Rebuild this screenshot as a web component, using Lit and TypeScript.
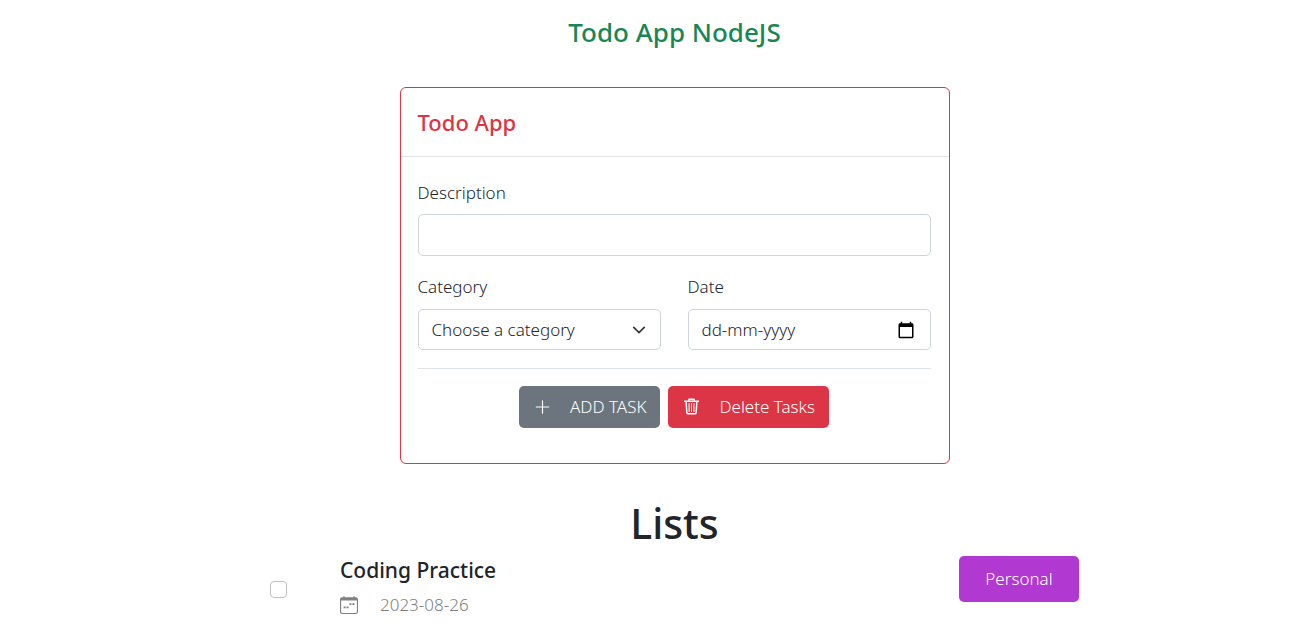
import { LitElement, html, css } from "lit";
import { customElement, property, state } from "lit/decorators.js";

interface Task {
  id: number;
  title: string;
  date: string;
  category: string;
}

@customElement("todo-form")
class TodoForm extends LitElement {
  static styles = css`
    :host {
      display: block;
    }
    * {
      box-sizing: border-box;
    }
    .card {
      border: 1px solid #dc3545;
      border-radius: 6px;
      background: #fff;
    }
    .card-header {
      padding: 18px 17px;
      border-bottom: 1px solid #dee2e6;
    }
    .card-title {
      margin: 0;
      font-size: 22px;
      line-height: 32px;
      font-weight: 500;
      color: #dc3545;
    }
    .card-body {
      padding: 22px 18px 35px 17px;
    }
    .field {
      display: flex;
      flex-direction: column;
      gap: 8px;
      min-width: 0;
    }
    .pair {
      display: grid;
      grid-template-columns: repeat(2, minmax(0, 1fr));
      gap: 27px;
      margin-top: 17px;
    }
    .pair .field {
      gap: 9px;
    }
    .label {
      line-height: 27px;
    }
    .control {
      width: 100%;
      height: 42px;
      padding: 0 14px;
      border: 1px solid #ced4da;
      border-radius: 5px;
      background: #fff;
      color: #212529;
      font: inherit;
      outline: none;
    }
    .control:focus,
    .date:focus-within {
      border-color: #86b7fe;
    }
    .select-wrap {
      display: grid;
      align-items: center;
    }
    .select-wrap > * {
      grid-area: 1 / 1;
    }
    .select {
      appearance: none;
      padding: 0 40px 0 13px;
    }
    .pair .control {
      height: 41px;
    }
    .chevron {
      justify-self: end;
      width: 14px;
      height: 14px;
      margin-right: 15px;
      pointer-events: none;
    }
    .date {
      display: flex;
      align-items: center;
      padding: 0 13px;
    }
    .date-input {
      flex: 1;
      min-width: 0;
      padding: 0;
      border: 0;
      background: none;
      color: inherit;
      font: inherit;
      outline: none;
    }
    .date-input::placeholder {
      color: #212529;
      opacity: 1;
    }
    .picker {
      display: flex;
      padding: 0 2px;
      border: 0;
      background: none;
      color: #000;
    }
    .picker svg {
      width: 18px;
      height: 18px;
    }
    .rule {
      height: 1px;
      margin: 18px 0 17px;
      border: 0;
      background: #dee2e6;
    }
    .actions {
      display: flex;
      justify-content: center;
      gap: 8px;
    }
    .btn {
      display: flex;
      align-items: center;
      gap: 18px;
      height: 42px;
      padding: 0 14px;
      border: 0;
      border-radius: 5px;
      color: #fff;
      font: inherit;
      cursor: pointer;
    }
    .btn svg {
      width: 19px;
      height: 18px;
    }
    .add {
      background: #6c757d;
    }
    .delete {
      background: #dc3545;
    }
  `;

  render() {
    return html`
      <form class="card" @submit=${(e: Event) => e.preventDefault()}>
        <div class="card-header"><h2 class="card-title">Todo App</h2></div>
        <div class="card-body">
          <div class="field">
            <label class="label" for="description">Description</label>
            <input class="control" id="description" type="text" autocomplete="off" />
          </div>
          <div class="pair">
            <div class="field">
              <label class="label" for="category">Category</label>
              <div class="select-wrap">
                <select class="control select" id="category">
                  <option>Choose a category</option>
                  <option>Personal</option>
                </select>
                <svg class="chevron" viewBox="0 0 16 16" fill="none" stroke="#343a40" stroke-width="2" stroke-linecap="round" stroke-linejoin="round" aria-hidden="true">
                  <path d="m2 5 6 6 6-6" />
                </svg>
              </div>
            </div>
            <div class="field">
              <label class="label" for="date">Date</label>
              <div class="control date">
                <input class="date-input" id="date" type="text" placeholder="dd-mm-yyyy" />
                <button class="picker" type="button" aria-label="Open calendar">
                  <svg viewBox="0 0 24 24" fill="currentColor" aria-hidden="true">
                    <path d="M20 3h-1V1h-2v2H7V1H5v2H4c-1.1 0-2 .9-2 2v16c0 1.1.9 2 2 2h16c1.1 0 2-.9 2-2V5c0-1.1-.9-2-2-2zm0 18H4V8h16v13z" />
                  </svg>
                </button>
              </div>
            </div>
          </div>
          <hr class="rule" />
          <div class="actions">
            <button class="btn add" type="submit">
              <svg viewBox="0 0 16 16" fill="currentColor" aria-hidden="true">
                <path d="M8 2a.5.5 0 0 1 .5.5v5h5a.5.5 0 0 1 0 1h-5v5a.5.5 0 0 1-1 0v-5h-5a.5.5 0 0 1 0-1h5v-5A.5.5 0 0 1 8 2Z" />
              </svg>
              <span>ADD TASK</span>
            </button>
            <button class="btn delete" type="button">
              <svg viewBox="0 0 16 17" fill="none" stroke="currentColor" stroke-linecap="round" stroke-linejoin="round" aria-hidden="true">
                <path stroke-width="1.4" d="M1.500 3h13M5.500 2.800V1.200h5v1.600M2.900 3.200l.7 10.600a1.200 1.200 0 0 0 1.200 1.100h6.400a1.200 1.200 0 0 0 1.200-1.100l.7-10.600" />
                <path d="M5.700 5.300v7.400M8 5.300v7.400M10.300 5.300v7.400" />
              </svg>
              <span>Delete Tasks</span>
            </button>
          </div>
        </div>
      </form>
    `;
  }
}

@customElement("todo-item")
class TodoItem extends LitElement {
  @property({ attribute: false }) task!: Task;

  static styles = css`
    :host {
      display: block;
    }
    .row {
      display: flex;
      align-items: flex-start;
    }
    .check {
      appearance: none;
      box-sizing: border-box;
      width: 17px;
      height: 17px;
      margin: 25px 53px 0 0;
      border: 1px solid #bfbfbf;
      border-radius: 4px;
      background: #fff;
    }
    .check:checked {
      border-color: #0d6efd;
      background: #0d6efd;
    }
    .info {
      flex: 1;
    }
    .title {
      display: block;
      font-size: 21px;
      line-height: 28px;
      font-weight: 500;
    }
    .when {
      display: flex;
      align-items: center;
      gap: 22px;
      margin-top: 8px;
      line-height: 26px;
      color: #808080;
    }
    .when svg {
      width: 18px;
      height: 18px;
    }
    .tag {
      width: 120px;
      height: 46px;
      border: 0;
      border-radius: 5px;
      background: #b138d1;
      color: #fff;
      font: inherit;
    }
  `;

  render() {
    const id = `task-${this.task.id}`;
    return html`
      <div class="row">
        <input class="check" type="checkbox" id=${id} />
        <div class="info">
          <label class="title" for=${id}>${this.task.title}</label>
          <div class="when">
            <svg viewBox="0 0 16 16" fill="currentColor" aria-hidden="true">
              <path d="M3.500 0a.5.5 0 0 1 .5.5V1h8V.5a.5.5 0 0 1 1 0V1h1a2 2 0 0 1 2 2v11a2 2 0 0 1-2 2H2a2 2 0 0 1-2-2V3a2 2 0 0 1 2-2h1V.5a.5.5 0 0 1 .5-.5zM1 4v10a1 1 0 0 0 1 1h12a1 1 0 0 0 1-1V4H1z" />
              <path d="M11 6.500h1.800v1.500H11zM8.400 6.500h1.800v1.500H8.400zM5.800 9.300h1.800v1.500H5.800zM3.200 9.300H5v1.500H3.200z" />
            </svg>
            <time>${this.task.date}</time>
          </div>
        </div>
        <button class="tag" type="button">${this.task.category}</button>
      </div>
    `;
  }
}

@customElement("app-root")
class AppRoot extends LitElement {
  @state() private tasks: Task[] = [
    { id: 1, title: "Coding Practice", date: "2023-08-26", category: "Personal" },
  ];

  static styles = css`
    :host {
      display: block;
      box-sizing: border-box;
      padding: 13px 0 14px 42px;
      background: #fff;
      color: #212529;
      font: 300 17px/26px "Noto Sans", "Open Sans", sans-serif;
    }
    .brand {
      margin: 0 0 36px;
      color: #198754;
      font-size: 26px;
      line-height: 38px;
      font-weight: 500;
      text-align: center;
    }
    .form {
      max-width: 550px;
      margin: 0 auto;
    }
    .heading {
      margin: 34px 0 8px;
      font-size: 41px;
      line-height: 50px;
      font-weight: 500;
      text-align: center;
    }
    .list {
      max-width: 809px;
      margin: 0 auto;
      padding: 0;
      list-style: none;
    }
  `;

  render() {
    return html`
      <main>
        <h1 class="brand">Todo App NodeJS</h1>
        <todo-form class="form"></todo-form>
        <h2 class="heading">Lists</h2>
        <ul class="list">
          ${this.tasks.map((task) => html`<li><todo-item .task=${task}></todo-item></li>`)}
        </ul>
      </main>
    `;
  }
}
